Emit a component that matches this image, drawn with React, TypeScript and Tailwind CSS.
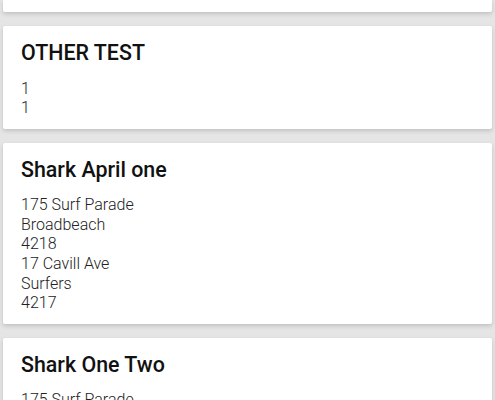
const places = [
  {
    id: "other-test",
    title: "OTHER TEST",
    lines: ["1", "1"],
  },
  {
    id: "shark-april-one",
    title: "Shark April one",
    lines: ["175 Surf Parade", "Broadbeach", "4218", "17 Cavill Ave", "Surfers", "4217"],
  },
  {
    id: "shark-one-two",
    title: "Shark One Two",
    lines: ["175 Surf Parade", "Broadbeach", "4218"],
  },
];

function PlaceCard({ title, lines }: { title: string; lines: string[] }) {
  return (
    <div className="bg-white rounded-[2px] shadow-[0_2px_4px_rgba(0,0,0,0.16)] pt-[14px] pb-[11px] px-[18px]">
      <h2 className="text-[21.4px] leading-[25px] font-medium text-[#111111]">{title}</h2>
      <div className="mt-[13.5px] text-[16px] leading-[19.6px] font-light text-[#222222]">
        {lines.map((line, i) => (
          <div key={i}>{line}</div>
        ))}
      </div>
    </div>
  );
}

export default function App() {
  return (
    <div
      className="h-screen overflow-hidden bg-[#e5e5e5] px-[3px]"
      style={{ fontFamily: "Roboto, 'Liberation Sans', sans-serif" }}
    >
      <div className="flex flex-col gap-[14px]">
        {/* tail of the card scrolled above the top */}
        <div className="h-[12px] bg-white rounded-b-[2px] shadow-[0_2px_4px_rgba(0,0,0,0.16)]" />
        {places.map((place) => (
          <PlaceCard key={place.id} title={place.title} lines={place.lines} />
        ))}
      </div>
    </div>
  );
}
